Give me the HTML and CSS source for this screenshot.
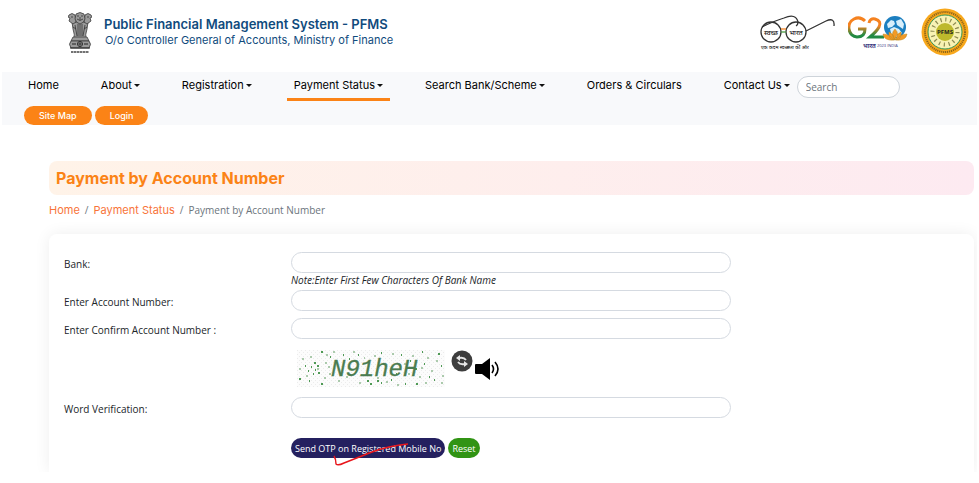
FILE: index.html
```html
<!DOCTYPE html>
<html lang="en">
<head>
	<meta charset="UTF-8">
	<title>Payment by Account Number</title>
	<link rel="stylesheet" href="styles.css">
</head>
<body>
	<header class="header">
		<svg class="emblem" viewBox="0 0 24 42" width="24" height="42">
			<g fill="#9a9a9a" stroke="#3a3a3a" stroke-width=".8">
				<path d="M4 10L5 17Q7 23 6 27H18Q17 23 19 17L20 10Z"/>
				<path d="M1 3Q4 0 7 3L8 10L5 12L1 9L2 6L0 5Z"/>
				<path d="M23 3Q20 0 17 3L16 10L19 12L23 9L22 6L24 5Z"/>
				<path d="M8 2Q12-1 16 2L17 7Q16 11 12 12Q8 11 7 7Z"/>
				<path d="M5 25H19L21 29H3Z"/>
				<path d="M3 29Q0 32 3 36H21Q24 32 21 29Z"/>
			</g>
			<path d="M9 4h2m2 0h2M9 7q3 3 6 0M12 5v3M3 5h2m14 0h2M7 13l2 11m1-12v12m2-12v12m2-12v12m3-11l-2 11M5 15l3 2m11-2l-3 2" fill="none" stroke="#333" stroke-width=".8"/>
			<circle cx="12" cy="32" r="2.5" fill="#ccc" stroke="#222"/>
			<path d="M4 32h4m8 0h4M12 30v4m-2-2h4M2 36h20" stroke="#222" stroke-width="1"/>
			<path d="M3 40h18" stroke="#444" stroke-width="1.6" stroke-dasharray="2 .5 3 .5"/>
		</svg>
		<div class="brand">
			<div class="brand-name">Public Financial Management System - PFMS</div>
			<div class="brand-sub">O/o Controller General of Accounts, Ministry of Finance</div>
		</div>
		<div class="logos">
			<svg class="swachh" viewBox="0 0 76 36" width="76" height="36">
				<g fill="none" stroke="#333" stroke-width="1.3">
					<circle cx="12" cy="18" r="10"/>
					<circle cx="37" cy="18" r="10"/>
					<path d="M3 13Q15 7 25 4Q37-1 39 8Q39 11 37 12M47 17L67 7Q76 3 75 12"/>
				</g>
				<path d="M22 15h5" stroke="#f58220" stroke-width="1.3"/>
				<path d="M22 18h5" stroke="#4a9a43" stroke-width="1.3"/>
				<text x="12" y="21" font-size="7" text-anchor="middle">स्वच्छ</text>
				<text x="37" y="21" font-size="7" text-anchor="middle">भारत</text>
				<text x="2" y="35" font-size="5">एक कदम स्वच्छता की ओर</text>
			</svg>
			<svg class="g20" viewBox="0 0 60 35" width="60" height="35">
				<defs>
					<linearGradient id="tri" x1="0" y1="0" x2="0" y2="1">
						<stop offset="0.4" stop-color="#f58220"/>
						<stop offset="0.9" stop-color="#218a43"/>
					</linearGradient>
				</defs>
				<path d="M17 6Q12 1 6 4Q0 7 1 14Q2 21 9 22Q17 22 17 14H10" fill="none" stroke="url(#tri)" stroke-width="3"/>
				<path d="M21 8Q22 3 27 4Q34 6 31 12Q29 16 22 22H36" fill="none" stroke="url(#tri)" stroke-width="3"/>
				<circle cx="47" cy="12" r="11" fill="#1c7fc0"/>
				<path d="M39 9l4-4 3 1 1 3-3 3-4 1zM48 6l5-2 3 5-1 5-3-2-3-2zM42 14l4-2 5 2 3 4-5 4h-5z" fill="#d9effb"/>
				<path d="M47 25Q42 19 47 14Q52 19 47 25M47 25Q40 25 41 17Q46 19 47 25M47 25Q54 25 53 17Q48 19 47 25M46 25Q36 26 35 19Q42 19 46 25M48 25Q58 26 59 19Q52 19 48 25" fill="#f39a25" stroke="#b98920" stroke-width=".5"/>
				<text x="15" y="33" font-size="6" font-weight="bold" fill="#36357d">भारत</text>
				<text x="29" y="32" font-size="4" fill="#36357d">2023 INDIA</text>
			</svg>
			<svg class="seal" viewBox="0 0 48 48" width="48" height="48">
				<circle cx="24" cy="24" r="23.5" fill="#f8a81c"/>
				<circle cx="24" cy="24" r="20" fill="none" stroke="#8d651a" stroke-width="2" stroke-dasharray="1.2 .8"/>
				<circle cx="24" cy="24" r="17" fill="#f8f2b4" stroke="#35975a" stroke-width="1"/>
				<circle cx="24" cy="24" r="12.5" fill="none" stroke="#8b8950" stroke-width="4" stroke-dasharray="1.2 3.7"/>
				<circle cx="24" cy="24" r="9" fill="#bdb92c"/>
				<text x="24" y="26" font-size="6" font-weight="bold" text-anchor="middle" fill="#222">PFMS</text>
			</svg>
		</div>
	</header>

	<nav class="navbar">
		<a class="nav-link" href="#">Home</a>
		<a class="nav-link drop" href="#">About</a>
		<a class="nav-link drop" href="#">Registration</a>
		<a class="nav-link drop active" href="#">Payment Status</a>
		<a class="nav-link drop" href="#">Search Bank/Scheme</a>
		<a class="nav-link" href="#">Orders &amp; Circulars</a>
		<a class="nav-link drop" href="#">Contact Us</a>
		<input class="search" type="search" placeholder="Search" aria-label="Search">
		<div class="nav-buttons">
			<button class="pill" type="button">Site Map</button>
			<button class="pill" type="button">Login</button>
		</div>
	</nav>

	<main class="main">
		<h1 class="title">Payment by Account Number</h1>
		<div class="breadcrumb">
			<a href="#">Home</a>
			<span>/</span>
			<a href="#">Payment Status</a>
			<span>/</span>
			<span>Payment by Account Number</span>
		</div>

		<form class="card">
			<label class="label" for="bank">Bank:</label>
			<div>
				<input class="field" id="bank" type="text">
				<div class="note">Note:Enter First Few Characters Of Bank Name</div>
			</div>
			<label class="label" for="account">Enter Account Number:</label>
			<input class="field" id="account" type="text">
			<label class="label" for="confirm">Enter Confirm Account Number :</label>
			<input class="field" id="confirm" type="text">

			<div class="captcha">
				<svg viewBox="0 0 148 37" width="148" height="37">
					<defs>
						<pattern id="grain" width="4" height="4" patternUnits="userSpaceOnUse">
							<path d="M0 0h1v1H0zM2 2h1v1H2z" fill="#ececec"/>
						</pattern>
					</defs>
					<rect width="148" height="37" fill="#fcfcfc"/>
					<rect width="148" height="37" fill="url(#grain)"/>
					<path d="M2 29h2M8 16h1M11 21h1M17 13h2M20 16h2M16 24h1M21 23h2M24 2h2M33 7h1M24 34h2M12 31h1M46 5h1M52 9h1M61 5h1M70 31h2M73 34h2M84 33h1M94 30h1M99 24h1M104 5h1M113 11h1M118 19h2M125 2h1M132 27h1M141 4h2M144 16h1M137 30h1M127 14h1M108 34h1M84 3h1M14 17h1M18 20h1M80 31h2M119 34h2" stroke="#4f9a55" stroke-width="2"/>
					<path d="M5 9h2M13 7h2M9 26h2M20 19h2M28 13h2M32 24h2M36 2h2M41 31h2M56 2h2M67 8h1M77 6h2M80 28h2M89 32h2M95 4h2M107 14h2M111 24h2M115 6h2M122 27h2M124 18h2M130 8h2M134 21h2M139 11h2M145 26h2M128 33h2M100 35h2M62 33h2M49 27h2M27 28h2M2 19h2M29 5h2M144 33h2M102 15h2M31 17h2" stroke="#91ba92" stroke-width="1.4"/>
					<text x="34" y="26" class="captcha-text">N91heH</text>
				</svg>
				<button class="icon-btn refresh" type="button" aria-label="Refresh">
					<svg viewBox="0 0 22 22" width="22" height="22">
						<circle cx="11" cy="11" r="10.5" fill="#3d3d3d"/>
						<path d="M15 10Q13 7 8 8M7 12Q9 15 14 14" fill="none" stroke="#e6e6e6" stroke-width="1.8"/>
						<path d="M9 5L5 8L9 11ZM13 11L17 14L13 17Z" fill="#e6e6e6"/>
					</svg>
				</button>
				<button class="icon-btn sound" type="button" aria-label="Listen">
					<svg viewBox="0 0 25 24" width="25" height="24">
						<path d="M1 7H7L15 1V23L7 17H1Q0 17 0 16V8Q0 7 1 7Z" fill="#000"/>
						<path d="M17 8Q20 12 17 16M20 5Q26 12 20 19" fill="none" stroke="#000" stroke-width="1.6"/>
					</svg>
				</button>
			</div>

			<label class="label" for="word">Word Verification:</label>
			<input class="field" id="word" type="text">

			<div class="actions">
				<button class="btn send" type="button">Send OTP on Registered Mobile No</button>
				<button class="btn reset" type="reset">Reset</button>
				<svg class="tick" viewBox="0 0 78 26" width="78" height="26">
					<path d="M2 14Q4 17 4 22Q6 24 12 21L40 10Q56 4 76 2" fill="none" stroke="#e8151b" stroke-width="1.4"/>
				</svg>
			</div>
		</form>
	</main>
</body>
</html>
```
FILE: styles.css
```css
*{
	box-sizing:border-box;
}
body{
	margin:0;
	background-color:#fff;
	font-family:"Open Sans","Noto Sans",sans-serif;
	font-size:10px;
	color:#212529;
}
a{
	text-decoration:none;
}
button,input{
	font-family:inherit;
	font-size:inherit;
}
svg{
	display:block;
}
.header{
	display:flex;
	align-items:flex-start;
	height:72px;
	padding:12px 10px 0 68px;
}
.brand{
	margin:4px 0 0 12px;
	font-family:Inter,"Open Sans",sans-serif;
	color:#104b7d;
}
.brand-name{
	font-size:13px;
	line-height:16px;
	font-weight:600;
}
.brand-sub{
	margin-left:1px;
	font-size:11px;
	line-height:16px;
}
.logos{
	display:flex;
	align-items:center;
	gap:13px;
	margin:-4px 0 0 auto;
}
.navbar{
	display:flex;
	flex-wrap:wrap;
	align-items:flex-start;
	margin:0 2px;
	padding:3px 0 0 19px;
	background-color:#f8f9fb;
}
.nav-link{
	margin-right:28px;
	padding:0 7px 3px;
	font-family:Inter,"Open Sans",sans-serif;
	font-size:11px;
	line-height:20px;
	color:#000;
	border-bottom:3px solid transparent;
}
.nav-link.active{
	border-bottom-color:#fb8316;
}
.drop:after{
	content:'';
	display:inline-block;
	margin-left:2px;
	vertical-align:2px;
	border:3px solid transparent;
	border-top-color:#111;
	border-bottom:0;
}
.search{
	width:103px;
	height:22px;
	margin:1px 0 0 -28px;
	padding:0 8px;
	border:1px solid #ced4da;
	border-radius:11px;
	background-color:#fff;
}
.search::placeholder{
	color:#6c757d;
}
.nav-buttons{
	display:flex;
	gap:3px;
	width:100%;
	margin-top:5px;
	padding-left:3px;
}
.pill{
	height:19px;
	padding:0 15px;
	border:0;
	border-radius:10px;
	background-color:#fb8316;
	color:#fff;
	font-family:Inter,"Open Sans",sans-serif;
	font-size:9px;
	font-weight:500;
}
.main{
	margin:36px 5px 0 49px;
}
.title{
	margin:0;
	padding:0 7px;
	border-radius:8px;
	background-image:linear-gradient(to right,#fff3e8,#fdeaf1);
	font-family:Inter,"Open Sans",sans-serif;
	font-size:16px;
	line-height:34px;
	font-weight:700;
	color:#fb8316;
}
.breadcrumb{
	display:flex;
	gap:5px;
	margin:7px 0 16px;
	line-height:16px;
	color:#6c757d;
}
.breadcrumb a{
	font-family:Inter,"Open Sans",sans-serif;
	font-size:11px;
	color:#f8743a;
}
.card{
	display:grid;
	grid-template-columns:227px minmax(0,440px);
	padding:18px 15px 14px;
	border-radius:8px 8px 0 0;
	box-shadow:0 0 16px rgba(0,0,0,.07);
	clip-path:inset(-16px -3px 0 -16px);
}
.label{
	line-height:24px;
}
.field{
	display:block;
	width:100%;
	height:21px;
	padding:0 10px;
	border:1px solid #d5dae1;
	border-radius:11px;
	background-color:#fff;
	margin-bottom:7px;
}
#bank{
	margin-bottom:0;
}
.note{
	padding-bottom:2px;
	line-height:15px;
	font-style:italic;
}
.captcha,.actions{
	grid-column:2;
	display:flex;
	align-items:flex-start;
}
.captcha{
	padding:4px 0 10px 6px;
}
.captcha-text{
	font-family:"Liberation Mono",monospace;
	font-size:24px;
	font-style:italic;
	fill:#4b7c50;
	stroke:#4b7c50;
	stroke-width:.3;
}
.icon-btn{
	padding:0;
	border:0;
	background:none;
}
.refresh{
	margin-left:6px;
}
.sound{
	margin:7px 0 0 2px;
}
.actions{
	position:relative;
	gap:3px;
	margin-top:13px;
}
.btn{
	height:20px;
	padding:0 4px;
	border:0;
	border-radius:10px;
	font-size:9px;
	color:#fff;
}
.send{
	background-color:#24205f;
}
.reset{
	background-color:#319414;
}
.tick{
	position:absolute;
	left:41px;
	top:4px;
}
```
